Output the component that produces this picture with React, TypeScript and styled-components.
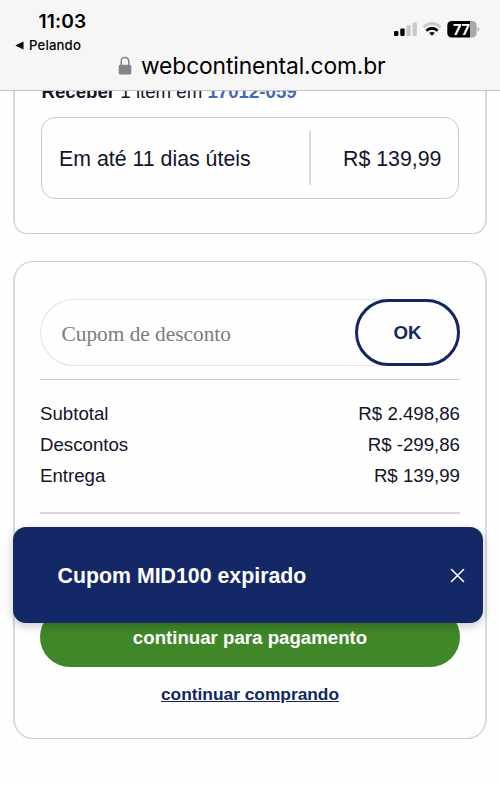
import React from "react";
import styled, { createGlobalStyle } from "styled-components";

const Global = createGlobalStyle`
  * { box-sizing: border-box; }
  body { margin: 0; background: #fefefe; font-family: "Liberation Sans", Arial, sans-serif; color: #14142b; }
`;

const Screen = styled.div`
  position: relative;
  width: 500px;
  height: 785px;
  overflow: hidden;
  display: flex;
  flex-direction: column;
`;

const BrowserBar = styled.header`
  flex: none;
  height: 91px;
  background: #f6f6f6;
  border-bottom: 1px solid #c4c4c6;
  font-family: Inter, sans-serif;
  color: #000;
`;

const StatusRow = styled.div`
  display: flex;
  justify-content: space-between;
  height: 54px;
  padding: 9px 20px 0 15px;
`;

const Clock = styled.div`
  padding-left: 23.5px;
  font-size: 19.2px;
  line-height: 25px;
  height: 24px;
  font-weight: 600;
  letter-spacing: 0.1px;
`;

const BackLink = styled.div`
  display: flex;
  align-items: center;
  gap: 5px;
  font-size: 13.2px;
  line-height: 24px;
  font-weight: 500;
  letter-spacing: 0.15px;
`;

const StatusIcons = styled.svg`
  margin-top: 8px;
  font-family: Inter, sans-serif;
`;

const AddressRow = styled.div`
  display: flex;
  gap: 9px;
  padding-left: 118px;
  height: 36px;
`;

const Address = styled.span`
  font-size: 22.8px;
  line-height: 24px;
  letter-spacing: -0.12px;
  white-space: nowrap;
`;

const Page = styled.main`
  flex: 1;
  min-height: 0;
  overflow: hidden;
  padding: 0 13px;
`;

const Card = styled.section<{ $first?: boolean }>`
  border: 1px solid #cbcbcb;
  border-left: 2px solid #dadada;
  border-right: 2px solid #dadada;
  border-radius: ${(p) => (p.$first ? "0 0 14px 14px" : "20px")};
  border-top-width: ${(p) => (p.$first ? 0 : 1)}px;
  height: ${(p) => (p.$first ? 143 : 478)}px;
  margin-bottom: 27px;
  padding: ${(p) => (p.$first ? "0 26px" : "37px 25px 0")};
`;

/* Scrolled partly beneath the browser bar. */
const DeliveryTitle = styled.div`
  display: flex;
  align-items: flex-end;
  height: 26px;
  padding: 0 0 14px 0.5px;
  font-size: 18.67px;
  line-height: 22px;
  white-space: pre;
`;

const PostalCode = styled.b`
  color: #4468bd;
`;

const Option = styled.div`
  display: flex;
  align-items: center;
  height: 82px;
  border: 1px solid #cbcbcb;
  border-radius: 14px;
  padding: 0 16.5px 0 17px;
  font-size: 21.33px;
`;

const OptionDays = styled.div`
  flex: 0 0 252px;
  height: 54px;
  line-height: 57px;
  border-right: 2px solid #dadada;
`;

const OptionPrice = styled.div`
  flex: 1;
  padding-top: 2px;
  text-align: right;
`;

const CouponBox = styled.div`
  display: flex;
  justify-content: space-between;
  height: 67px;
  border-radius: 34px;
  box-shadow: inset 0 0 0 1px #e2e2e2;
`;

const CouponInput = styled.input`
  width: 300px;
  border: 0;
  outline: 0;
  background: transparent;
  padding: 4px 0 0 21.5px;
  font: 21.33px "Liberation Serif", "Times New Roman", serif;
  &::placeholder { color: #7c7c7c; opacity: 1; }
`;

const OkButton = styled.button`
  width: 105px;
  height: 67px;
  border: 3px solid #14265f;
  border-radius: 34px;
  background: #fefefe;
  color: #14265f;
  font: 700 18.67px "Liberation Sans", Arial, sans-serif;
`;

const Totals = styled.div`
  height: 135px;
  margin-top: 13px;
  padding-top: 18px;
  border-top: 1px solid #c8c8c8;
  border-bottom: 2px solid #d8d5d8;
`;

const TotalRow = styled.div`
  display: flex;
  justify-content: space-between;
  font-size: 18.67px;
  line-height: 31px;
  height: 31px;
`;

const PayButton = styled.button`
  display: block;
  width: 100%;
  height: 60px;
  margin-top: 93px;
  border: 0;
  border-radius: 30px;
  padding: 2px 0 0;
  background: #3f8729;
  color: #fff;
  font: 700 18.67px "Liberation Sans", Arial, sans-serif;
`;

const KeepShopping = styled.a`
  display: block;
  margin-top: 17px;
  text-align: center;
  font-size: 17.33px;
  line-height: 21px;
  font-weight: 700;
  color: #14265f;
  text-decoration: underline;
`;

const Toast = styled.div`
  position: absolute;
  left: 13px;
  top: 527px;
  width: 470px;
  height: 96px;
  display: flex;
  align-items: center;
  justify-content: space-between;
  padding: 0 18px 0 44.5px;
  border-radius: 13px;
  background: #142766;
  color: #fff;
  font-size: 21.33px;
  font-weight: 700;
  box-shadow: 0 3px 10px rgba(0, 0, 0, 0.22);
`;

const ToastText = styled.span`
  padding-top: 2px;
`;

const totals = [
  ["Subtotal", "R$ 2.498,86"],
  ["Descontos", "R$ -299,86"],
  ["Entrega", "R$ 139,99"],
];

function Status() {
  return (
    <StatusIcons width="86" height="24" viewBox="394 17 86 24">
      <rect x="394" y="31" width="4.4" height="5" rx="1.2" />
      <rect x="400.3" y="28.5" width="4.4" height="7.5" rx="1.2" />
      <rect x="406.4" y="25.2" width="4.4" height="10.8" rx="1.2" fill="#c9c9c9" />
      <rect x="412.5" y="22.4" width="4.4" height="13.6" rx="1.2" fill="#c9c9c9" />
      <g fill="none" strokeWidth="2.7">
        <path d="M423.5 27.2 Q432 19.8 440.5 27.2" stroke="#c9c9c9" />
        <path d="M426.3 30.7 Q432 25.8 437.7 30.7" stroke="#000" />
      </g>
      <path d="M429.2 33 Q432 31 434.8 33 L432 35.8 Z" />
      <path d="M452 21 H470 V37.5 H452 Q447.3 37.5 447.3 32.8 V25.7 Q447.3 21 452 21Z" />
      <path d="M470 21 H472 Q476.7 21 476.7 25.7 V32.8 Q476.7 37.5 472 37.5 H470Z" fill="#a8a8a8" />
      <path d="M477.7 27 Q479.2 27.5 479.2 29.3 Q479.2 31 477.7 31.6Z" fill="#a8a8a8" />
      <text x="461.3" y="34.6" textAnchor="middle" fontSize="14.5" fontWeight="700" letterSpacing="-0.4" fill="#fff">77</text>
    </StatusIcons>
  );
}

export default function App() {
  return (
    <>
      <Global />
      <Screen>
        <BrowserBar>
          <StatusRow>
            <div>
              <Clock>11:03</Clock>
              <BackLink>
                <svg width="9" height="9" viewBox="0 0 9 9"><path d="M0.3 4.5 L8.5 0.4 V8.6Z" /></svg>
                Pelando
              </BackLink>
            </div>
            <Status />
          </StatusRow>
          <AddressRow>
            <svg width="14" height="22" viewBox="0 0 14 22">
              <rect x="0.7" y="10.8" width="12.6" height="9.8" rx="1.6" fill="#858489" />
              <path d="M3.2 11.3 V7.4 Q3.2 3.4 7 3.4 Q10.8 3.4 10.8 7.4 V11.3" fill="none" stroke="#858489" strokeWidth="1.5" />
            </svg>
            <Address>webcontinental.com.br</Address>
          </AddressRow>
        </BrowserBar>
        <Page>
          <Card $first>
            <DeliveryTitle>
              <b>Receber</b> 1 item em <PostalCode>17012-059</PostalCode>
            </DeliveryTitle>
            <Option>
              <OptionDays>Em até 11 dias úteis</OptionDays>
              <OptionPrice>R$ 139,99</OptionPrice>
            </Option>
          </Card>
          <Card>
            <CouponBox>
              <CouponInput placeholder="Cupom de desconto" />
              <OkButton>OK</OkButton>
            </CouponBox>
            <Totals>
              {totals.map(([label, value]) => (
                <TotalRow key={label}><span>{label}</span><span>{value}</span></TotalRow>
              ))}
            </Totals>
            <PayButton>continuar para pagamento</PayButton>
            <KeepShopping>continuar comprando</KeepShopping>
          </Card>
        </Page>
        <Toast role="alert">
          <ToastText>Cupom MID100 expirado</ToastText>
          <svg width="15" height="15" viewBox="0 0 15 15"><path d="M1.5 1.5 L13.5 13.5 M13.5 1.5 L1.5 13.5" stroke="#fff" strokeWidth="1.6" strokeLinecap="round" /></svg>
        </Toast>
      </Screen>
    </>
  );
}
